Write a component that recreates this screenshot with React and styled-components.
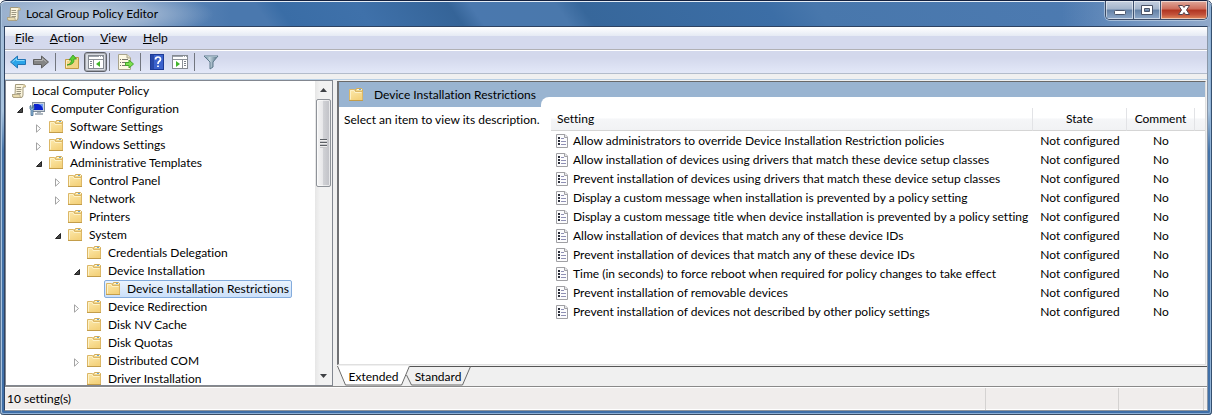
import React from "react";
import styled, { createGlobalStyle, css } from "styled-components";

const GlobalStyle = createGlobalStyle`
  * { box-sizing: border-box; }
  body {
    margin: 0;
    font: 12px/18px Lato, "Segoe UI", "Liberation Sans", sans-serif;
    font-variant-ligatures: none;
    color: #000;
  }
  button {
    font: inherit;
    font-variant-ligatures: none;
    color: inherit;
    background: none;
    border: 0;
    padding: 0;
    margin: 0;
  }
  svg { display: block; flex: none; }
`;

/* ---------- window frame ---------- */

const Window = styled.div`
  display: flex;
  flex-direction: column;
  height: 100vh;
  padding: 0 4px 4px;
  overflow: hidden;
  border-radius: 6px 6px 4px 4px;
  border-top: 1px solid #14213f;
  box-shadow: inset 0 1px #e4ecf5, inset 1px 0 #5d7693, inset -1px 0 #35506f,
    inset 0 -1px #3c4c60, inset 2px 0 #a9c3de, inset -2px 0 #8fb2d6,
    inset 0 -2px #8fb0d5;
  background:
    radial-gradient(ellipse 130px 26px at 84px 13px, #b9c9dd 0, #a3b8d3dd 50%, #8ea9ca00 100%) no-repeat,
    linear-gradient(to right, #8ba5c6 0, #7798c0 100px, #5f88b8 165px, #4a78ae00 230px) no-repeat 0 0 / 100% 26px,
    linear-gradient(to left, #91a9ca 0, #7899c3 60px, #4c79af00 150px) no-repeat 0 0 / 100% 26px,
    linear-gradient(55deg, #4a78ae 0, #4a78ae 222px, #3a6da6 240px, #3f71aa 305px,
      #356498 380px, #4a78ae 398px, #4a78ac 468px, #37679b 488px, #3c6ea6 640px,
      #4877ac 680px, #4f7cb3 100%) no-repeat 0 0 / 100% 26px,
    linear-gradient(#9db8d6, #a9c4de 110px, #4473a8 150px, #3f6fa8);
`;

const TitleBar = styled.header`
  display: flex;
  align-items: flex-start;
  height: 25px;
  flex: none;
  padding-left: 2px;
`;

const Title = styled.h1`
  display: flex;
  align-items: center;
  gap: 4px;
  flex: 1;
  height: 25px;
  margin: 0;
  font-size: 12px;
  font-weight: 400;
`;

const WindowButtons = styled.div`
  display: flex;
  height: 19px;
  border: 1px solid #3b4b66;
  border-top: 0;
  border-radius: 0 0 5px 5px;
  overflow: hidden;
  box-shadow: 0 0 0 1px #c3d3e6aa;
`;

const WindowButton = styled.button`
  display: flex;
  align-items: center;
  justify-content: center;
  width: ${(p) => (p.$close ? 47 : 27)}px;
  border-left: 1px solid #3e506e;
  box-shadow: inset 0 0 0 1px #ffffff88;
  background: linear-gradient(#c5d0df, #a3b4cb 45%, #6380a5 50%, #8fa9c9);
  &:first-child { border-left: 0; }
  ${(p) => p.$close && css`
    background: linear-gradient(#e0a99b, #cd6c5a 45%, #b03420 50%, #c2513a 75%, #e08a5c);
  `}
`;

const Body = styled.div`
  display: flex;
  flex-direction: column;
  flex: 1;
  min-height: 0;
  border: 1px solid #2e4363;
  border-right-color: #8a97a8;
  border-bottom-color: #8d939b;
  background: #f0f0f0;
`;

/* ---------- menu and toolbar ---------- */

const MenuBar = styled.nav`
  display: flex;
  align-items: center;
  gap: 16px;
  height: 23px;
  flex: none;
  padding-left: 10px;
  border-bottom: 1px solid #b0b0b4;
  background: linear-gradient(#fff, #e5eaf4 9px, #d4d9ed 9px, #d4d9ed);
`;

const MenuItem = styled.button`
  &::first-letter { text-decoration: underline; }
`;

const Toolbar = styled.div`
  display: flex;
  align-items: center;
  height: 24px;
  flex: none;
  padding-left: 2px;
  border-top: 1px solid #fff;
  border-bottom: 1px solid #b3bccb;
  background: linear-gradient(#d3d8ec 30%, #e3e8f8);
`;

const ToolButton = styled.button`
  display: flex;
  align-items: center;
  justify-content: center;
  width: 23px;
  height: 20px;
  padding-right: 1px;
  ${(p) => p.$pressed && css`
    padding-right: 0;
    border: 1px solid #5e6168;
    border-radius: 3px;
    background: #d9dce2;
    box-shadow: inset 0 0 0 1px #a5a8b0;
  `}
`;

const ToolSeparator = styled.span`
  width: 1px;
  height: 18px;
  margin: 0 5px 0 2px;
  background: #72767f;
`;

/* ---------- split content ---------- */

const Content = styled.main`
  display: grid;
  grid-template-columns: 328px minmax(0, 1fr);
  gap: 4px;
  flex: 1;
  min-height: 0;
  margin-top: 5px;
  border-top: 1px solid #b8cfe5;
`;

const TreePane = styled.section`
  display: flex;
  min-height: 0;
  border: 1px solid #828790;
  background: #fff;
`;

const Tree = styled.ul`
  flex: 1;
  min-width: 0;
  margin: 0;
  padding: 1px 0 0 1px;
  list-style: none;
  overflow: hidden;
`;

const TreeRow = styled.li`
  display: flex;
  align-items: center;
  height: 18px;
  padding-left: ${(p) => (p.$level ? 19 * p.$level - 15 : 3)}px;
`;

const Twisty = styled.span`
  display: flex;
  justify-content: center;
  width: 17px;
  padding-top: 2px;
`;

const TreeLabel = styled.span`
  display: flex;
  align-items: center;
  gap: ${(p) => (p.$root ? 5 : 6)}px;
  height: 18px;
  padding-right: 2px;
  white-space: nowrap;
  border: 1px solid transparent;
  border-radius: 2px;
  ${(p) => p.$selected && css`
    border-color: #84acdd;
    background: linear-gradient(#eaf3fd, #cbe0fa);
  `}
`;

const ScrollBar = styled.div`
  display: flex;
  flex-direction: column;
  width: 17px;
  background: linear-gradient(to right, #e6e6e6, #f2f2f2 30%, #f2f2f2);
`;

const ScrollButton = styled.button`
  display: flex;
  align-items: center;
  justify-content: center;
  height: 18px;
`;

const ScrollThumb = styled.div`
  display: flex;
  flex-direction: column;
  align-items: center;
  justify-content: center;
  height: 88px;
  margin: 0 1px auto;
  border: 1px solid #8f9399;
  border-radius: 2px;
  background: linear-gradient(to right, #f5f5f5, #e7e7e9 45%, #d0d1d5 50%, #c0c1c6);
  box-shadow: inset 0 0 0 1px #ffffff99;
`;

const Grip = styled.span`
  width: 7px;
  height: 9px;
  background: repeating-linear-gradient(#5d6166 0 1px, #eee 1px 2px, #c8c8cc 2px 3px);
`;

/* ---------- details ---------- */

const DetailPane = styled.section`
  display: flex;
  flex-direction: column;
  min-height: 0;
`;

const DetailView = styled.div`
  display: flex;
  flex-direction: column;
  flex: 1;
  min-height: 0;
  margin: 1px 1px 0 0;
  border: 1px solid #e0e0e0;
  border-top-color: #696969;
  border-left: 2px solid #707174;
  background: #fff;
`;

const Columns = styled.div`
  display: grid;
  grid-template-columns: 202px minmax(0, 1fr);
`;

const Banner = styled(Columns)`
  height: 25px;
  flex: none;
  background: #99b4d1;
`;

const BannerTitle = styled.h2`
  display: flex;
  align-items: center;
  gap: 10px;
  margin: 0;
  padding-left: 9px;
  font-size: 12px;
  font-weight: 400;
  white-space: nowrap;
`;

const BannerCurve = styled.div`
  margin-top: 15px;
  border-top-left-radius: 8px;
  background: #fff;
`;

const Description = styled.p`
  margin: 0;
  padding: 4px 0 0 5px;
  white-space: nowrap;
`;

const PolicyTable = styled.table`
  width: 100%;
  table-layout: fixed;
  border-collapse: separate;
  border-spacing: 0;
`;

const TableWrap = styled.div`
  padding: 1px 0 0 10px;
`;

const Head = styled.th`
  width: ${(p) => p.$width || "auto"};
  height: 23px;
  padding: 0 ${(p) => (p.$left ? 6 : 0)}px;
  text-align: ${(p) => (p.$left ? "left" : "center")};
  font-weight: 400;
  border-right: ${(p) => (p.$last ? 0 : 1)}px solid #e2e3e6;
  border-bottom: 1px solid #d5d5d5;
  background: linear-gradient(#fff 45%, #f5f6f8 50%, #f1f2f4);
`;

const Cell = styled.td`
  height: 19px;
  padding: 0;
  text-align: center;
  white-space: nowrap;
`;

const SettingName = styled.span`
  display: flex;
  align-items: center;
  gap: 4px;
  height: 19px;
  padding-left: 4px;
`;

/* ---------- view tabs ---------- */

const Tabs = styled.div`
  display: flex;
  height: 20px;
  flex: none;
  margin-top: 1px;
  background: linear-gradient(#555 0 1px, #f0f0f0 1px);
`;

const Tab = styled.button`
  position: relative;
  width: ${(p) => (p.$active ? 73 : 66)}px;
  margin-right: ${(p) => (p.$active ? "-5px" : "0")};
  padding-top: 1px;
  z-index: ${(p) => (p.$active ? 1 : 0)};
`;

const TabShape = styled.svg`
  position: absolute;
  inset: 0;
`;

const TabText = styled.span`
  position: relative;
`;

/* ---------- status bar ---------- */

const StatusBar = styled.footer`
  display: grid;
  grid-template-columns: minmax(0, 1fr) 133px 85px 3px;
  height: 24px;
  flex: none;
  padding-bottom: 1px;
  border-top: 1px solid #8a8a8a;
  background: #f0edec;
  box-shadow: inset 0 1px #fff, inset 0 -1px #fff;
`;

const StatusCell = styled.span`
  margin: 1px 0 1px;
  padding-left: 2px;
  line-height: 22px;
  border-right: 1px solid #d4d2d1;
`;

/* ---------- icons ---------- */

const FolderIcon = () => (
  <svg width="16" height="16" viewBox="0 0 16 16">
    <defs>
      <linearGradient id="folder" x1="0" y1="0" x2="0.500" y2="1">
        <stop offset="0" stopColor="#fdeaae" />
        <stop offset="1" stopColor="#f4d27c" />
      </linearGradient>
    </defs>
    <path d="M7.500 4V3L8.500 1.500H13.500L14.500 2.500V5" fill="#f3d98c" stroke="#d3ac58" />
    <path d="M9 2.500H14" stroke="#fff8dc" />
    <path d="M11 2.500H13" stroke="#6da6d4" />
    <path d="M1.500 2.500H6.500L7.500 4.500H14.500V13.500H1.500Z" fill="url(#folder)" stroke="#dcb766" />
    <path d="M1 13.500H15" stroke="#c39d4a" />
    <path d="M2.500 12.500V3.500H6L7 5.500H13.500" fill="none" stroke="#fdf2c8" />
  </svg>
);

const ScrollIcon = () => (
  <svg width="16" height="16" viewBox="0 0 16 16">
    <path d="M4.500 1.500H12.500Q14.500 1.500 14.500 4H12V12Q12 14.500 10 14.500H3Q1.500 14.500 1.500 12.500V11.500H4Z" fill="#faf4dc" stroke="#a39a7c" />
    <path d="M12 4Q12 1.700 13.300 1.700Q14.500 2 14.500 4Z" fill="#d9c896" />
    <path d="M1.500 11.500H9V13Q9 14.500 10.500 14.500H3Q1.500 14.500 1.500 12.500Z" fill="#e9dcb0" stroke="#a39a7c" strokeWidth="0.700" />
    <path d="M5.500 4.500H10M5.500 6.500H10.500M5.500 8.500H10M5.500 10.500H10" stroke="#9c9681" />
  </svg>
);

const ComputerIcon = () => (
  <svg width="16" height="16" viewBox="0 0 16 16">
    <rect x="3.500" y="1.500" width="12" height="9" fill="#c8d2dc" stroke="#7e8b99" />
    <rect x="5" y="3" width="9" height="6" fill="#0a22cf" />
    <path d="M9 3H14V8Q13 4 9 3Z" fill="#6e9bf5" />
    <path d="M8 11H12V12H14V14H6V12H8Z" fill="#aeb7c0" />
    <path d="M1 5V8L2 9V14.500H4V9L5 8V5L4 4.500V7H2V4.500Z" fill="#8fb8da" stroke="#41698f" strokeWidth="0.800" />
  </svg>
);

const PolicyIcon = () => (
  <svg width="14" height="16" viewBox="0 0 14 16">
    <path d="M1.500 1.500H10L12.500 4V14.500H1.500Z" fill="#fcfcfd" stroke="#a0a0a4" />
    <path d="M9.500 1.500V4.500H12.500" fill="#e8e8ec" stroke="#a0a0a4" />
    <path d="M3 4H5V6H3ZM3 7H5V9H3ZM3 10H5V12H3Z" fill="#2a2d38" />
    <path d="M6 5.500H9M6 8.500H11M6 11.500H11" stroke="#8f90b4" />
  </svg>
);

const ArrowIcon = ({ forward }) => (
  <svg width="16" height="16" viewBox="0 0 16 16">
    <path
      d={forward ? "M.5 5.500H8.500V2L15.500 8L8.500 14V10.500H.5Z" : "M15.500 5.500H7.500V2L.5 8L7.500 14V10.500H15.500Z"}
      fill={forward ? "#858585" : "#2ba4e8"}
      stroke={forward ? "#606060" : "#2375b5"}
    />
    <path
      d={forward ? "M1.500 6.500H9.500V4.500L13.500 8" : "M14.500 6.500H6.500V4.500L2.500 8"}
      fill="none"
      stroke={forward ? "#b5b5b5" : "#8ad9fa"}
    />
  </svg>
);

const FolderUpIcon = () => (
  <svg width="16" height="16" viewBox="0 0 16 16">
    <path d="M1.500 5.500H9V3.500H14.500V14.500H1.500Z" fill="#f2d483" stroke="#c19a45" />
    <path d="M2.500 13.500V6.500H10V4.500H13.500" fill="none" stroke="#fcefbe" />
    <path d="M3 11Q7.500 10 7.500 6H5L9 1L12.500 5H10Q10.500 11 3 11Z" fill="#5bd135" stroke="#35931e" strokeWidth="0.800" />
  </svg>
);

const PanelIcon = ({ right }) => (
  <svg width="16" height="14" viewBox="0 0 16 14">
    <rect x="0.500" y="0.500" width="15" height="13" fill="#fff" stroke="#858a92" />
    <path d="M1 1.500H15" stroke="#9da3ac" />
    <path d="M11 1.500H12M13 1.500H14" stroke="#fff" />
    <path d="M1 4.500H15" stroke="#8d929a" />
    <path d={right ? "M10.500 5V13" : "M5.500 5V13"} stroke="#8d929a" />
    <path d={right ? "M12 6.500H14M12 8.500H14M12 10.500H14" : "M2 6.500H4M2 8.500H4M2 10.500H4"} stroke="#7d838c" />
    <path d={right ? "M4 6L8 9L4 12Z" : "M12 6L8 9L12 12Z"} fill="#41b52b" />
  </svg>
);

const ExportIcon = () => (
  <svg width="16" height="16" viewBox="0 0 16 16">
    <path d="M.5 .5H9L12.500 4V15.500H.5Z" fill="#fdf9e4" stroke="#a9a48c" />
    <path d="M9 .5V4H12.500" fill="#e8e2c5" stroke="#a9a48c" />
    <path d="M2 5.500H3M4 5.500H10M2 8.500H3M4 8.500H8M2 11.500H3M4 11.500H8" stroke="#77756b" />
    <path d="M7.500 8.500H11V6L15.500 10L11 14V11.500H7.500Z" fill="#7ce04e" stroke="#45a52c" />
  </svg>
);

const HelpIcon = () => (
  <svg width="14" height="16" viewBox="0 0 14 16">
    <rect x="0.500" y="0.500" width="13" height="15" fill="#3b62cd" stroke="#1d3a97" />
    <path d="M1 1H4V15H1Z" fill="#2747a8" />
    <path d="M5.500 5.500Q5.500 3 8 3Q10.500 3 10.500 5.200Q10.500 6.500 9 7.500Q8 8.200 8 10M8 11.500V13" fill="none" stroke="#fff" strokeWidth="1.700" />
  </svg>
);

const FilterIcon = () => (
  <svg width="16" height="16" viewBox="0 0 16 16">
    <defs>
      <linearGradient id="funnel">
        <stop offset="0" stopColor="#5f7e92" />
        <stop offset="0.400" stopColor="#c3d4de" />
        <stop offset="1" stopColor="#4f6c80" />
      </linearGradient>
    </defs>
    <path d="M1 2H15L10 8V13L7 15V8Z" fill="url(#funnel)" stroke="#5c788a" />
    <path d="M2 2.500H14" stroke="#9fb6c4" />
  </svg>
);

const TwistyIcon = ({ open }) => (
  <svg width="7" height="9" viewBox="0 0 7 9">
    {open ? (
      <path d="M6.500 1.500V6.500H1.500Z" fill="#474747" stroke="#262626" />
    ) : (
      <path d="M1.500 .8V8.200L5.500 4.500Z" fill="#fff" stroke="#a3a3a3" />
    )}
  </svg>
);

const ScrollArrow = ({ down }) => (
  <svg width="7" height="4" viewBox="0 0 7 4">
    <path d={down ? "M0 0H7L3.500 4Z" : "M0 4H7L3.500 0Z"} fill="#3f4145" />
  </svg>
);

/* ---------- data ---------- */

const TREE = [
  [0, "Local Computer Policy", null, ScrollIcon],
  [1, "Computer Configuration", "open", ComputerIcon],
  [2, "Software Settings", "closed"],
  [2, "Windows Settings", "closed"],
  [2, "Administrative Templates", "open"],
  [3, "Control Panel", "closed"],
  [3, "Network", "closed"],
  [3, "Printers"],
  [3, "System", "open"],
  [4, "Credentials Delegation"],
  [4, "Device Installation", "open"],
  [5, "Device Installation Restrictions"],
  [4, "Device Redirection", "closed"],
  [4, "Disk NV Cache"],
  [4, "Disk Quotas"],
  [4, "Distributed COM", "closed"],
  [4, "Driver Installation"],
];

const SELECTED = "Device Installation Restrictions";

const SETTINGS = [
  "Allow administrators to override Device Installation Restriction policies",
  "Allow installation of devices using drivers that match these device setup classes",
  "Prevent installation of devices using drivers that match these device setup classes",
  "Display a custom message when installation is prevented by a policy setting",
  "Display a custom message title when device installation is prevented by a policy setting",
  "Allow installation of devices that match any of these device IDs",
  "Prevent installation of devices that match any of these device IDs",
  "Time (in seconds) to force reboot when required for policy changes to take effect",
  "Prevent installation of removable devices",
  "Prevent installation of devices not described by other policy settings",
];

/* ---------- app ---------- */

export default function App() {
  return (
    <>
      <GlobalStyle />
      <Window>
        <TitleBar>
          <Title><ScrollIcon />Local Group Policy Editor</Title>
          <WindowButtons>
            <WindowButton aria-label="Minimize">
              <svg width="12" height="12" viewBox="0 0 12 12">
                <rect x="0.500" y="6.500" width="11" height="4" rx="1" fill="#fff" stroke="#4b5468" />
              </svg>
            </WindowButton>
            <WindowButton aria-label="Maximize">
              <svg width="12" height="12" viewBox="0 0 12 12">
                <path d="M.5 1.500H11.500V10.500H.5ZM3.500 4.500V7.500H8.500V4.500Z" fill="#fff" fillRule="evenodd" stroke="#4b5468" />
              </svg>
            </WindowButton>
            <WindowButton $close aria-label="Close">
              <svg width="12" height="12" viewBox="0 0 12 12">
                <path d="M.5 1.500H4.500L6 3.500L7.500 1.500H11.500L8.500 6L11.500 10.500H7.500L6 8.500L4.500 10.500H.5L3.500 6Z" fill="#fff" stroke="#55414a" />
              </svg>
            </WindowButton>
          </WindowButtons>
        </TitleBar>

        <Body>
          <MenuBar>
            {["File", "Action", "View", "Help"].map((m) => <MenuItem key={m}>{m}</MenuItem>)}
          </MenuBar>
          <Toolbar>
            <ToolButton aria-label="Back"><ArrowIcon /></ToolButton>
            <ToolButton aria-label="Forward"><ArrowIcon forward /></ToolButton>
            <ToolSeparator />
            <ToolButton aria-label="Up one level"><FolderUpIcon /></ToolButton>
            <ToolButton $pressed aria-label="Show console tree"><PanelIcon /></ToolButton>
            <ToolSeparator />
            <ToolButton aria-label="Export list"><ExportIcon /></ToolButton>
            <ToolSeparator />
            <ToolButton aria-label="Help"><HelpIcon /></ToolButton>
            <ToolButton aria-label="Show action pane"><PanelIcon right /></ToolButton>
            <ToolSeparator />
            <ToolButton aria-label="Filter"><FilterIcon /></ToolButton>
          </Toolbar>

          <Content>
            <TreePane>
              <Tree>
                {TREE.map(([level, name, state, Icon = FolderIcon]) => (
                  <TreeRow key={name} $level={level}>
                    {level > 0 && <Twisty>{state && <TwistyIcon open={state === "open"} />}</Twisty>}
                    <TreeLabel $root={level === 0} $selected={name === SELECTED}><Icon />{name}</TreeLabel>
                  </TreeRow>
                ))}
              </Tree>
              <ScrollBar>
                <ScrollButton aria-label="Scroll up"><ScrollArrow /></ScrollButton>
                <ScrollThumb><Grip /></ScrollThumb>
                <ScrollButton aria-label="Scroll down"><ScrollArrow down /></ScrollButton>
              </ScrollBar>
            </TreePane>

            <DetailPane>
              <DetailView>
                <Banner>
                  <BannerTitle><FolderIcon />{SELECTED}</BannerTitle>
                  <BannerCurve />
                </Banner>
                <Columns>
                  <Description>Select an item to view its description.</Description>
                  <TableWrap>
                    <PolicyTable>
                      <thead>
                        <tr>
                          <Head $left>Setting</Head>
                          <Head $width="94px">State</Head>
                          <Head $width="68px">Comment</Head>
                          <Head $width="10px" $last aria-hidden="true" />
                        </tr>
                      </thead>
                      <tbody>
                        {SETTINGS.map((s) => (
                          <tr key={s}>
                            <Cell><SettingName><PolicyIcon />{s}</SettingName></Cell>
                            <Cell>Not configured</Cell>
                            <Cell>No</Cell>
                            <Cell />
                          </tr>
                        ))}
                      </tbody>
                    </PolicyTable>
                  </TableWrap>
                </Columns>
              </DetailView>
              <Tabs>
                <Tab $active>
                  <TabShape width="73" height="20" viewBox="0 0 73 20">
                    <path d="M0 0L8 19H65L73 0Z" fill="#fff" />
                    <path d="M.5 0L8.500 19H64.500L72.500 0" fill="none" stroke="#696969" />
                  </TabShape>
                  <TabText>Extended</TabText>
                </Tab>
                <Tab>
                  <TabShape width="66" height="20" viewBox="0 0 66 20">
                    <path d="M1.500 9L6.500 19H57.500L65.500 .5" fill="none" stroke="#696969" />
                  </TabShape>
                  <TabText>Standard</TabText>
                </Tab>
              </Tabs>
            </DetailPane>
          </Content>

          <StatusBar>
            <StatusCell>10 setting(s)</StatusCell>
            <StatusCell />
            <StatusCell />
          </StatusBar>
        </Body>
      </Window>
    </>
  );
}
